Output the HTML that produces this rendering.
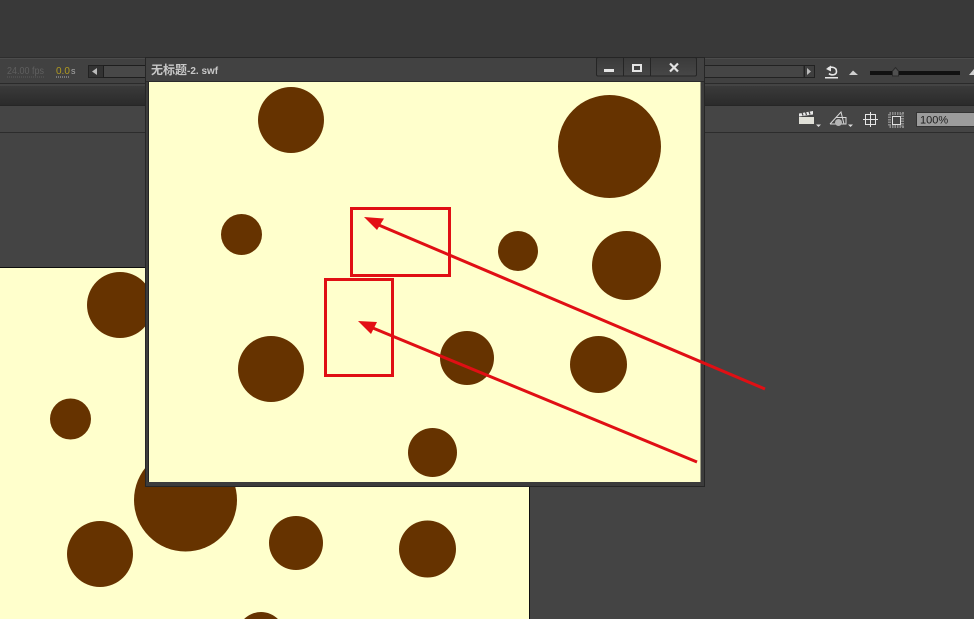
<!DOCTYPE html>
<html><head><meta charset="utf-8"><style>
html,body{margin:0;padding:0;background:#444;width:974px;height:619px;overflow:hidden}
svg{display:block;position:absolute;left:0;top:0}
text{font-family:"Liberation Sans","Noto Sans CJK SC",sans-serif}
</style></head><body>
<svg width="974" height="619" viewBox="0 0 974 619" xmlns="http://www.w3.org/2000/svg">
<defs>
<linearGradient id="band" x1="0" y1="0" x2="0" y2="1"><stop offset="0" stop-color="#3a3a3a"/><stop offset="1" stop-color="#2a2a2a"/></linearGradient>
<linearGradient id="btn" x1="0" y1="0" x2="0" y2="1"><stop offset="0" stop-color="#3a3a3a"/><stop offset="1" stop-color="#474747"/></linearGradient>
</defs>
<!-- backgrounds -->
<rect width="974" height="619" fill="#434343"/>
<rect width="974" height="58" fill="#393939"/>
<rect y="58" width="974" height="25" fill="#414141"/>
<rect y="58" width="974" height="1" fill="#4c4c4c"/>
<rect y="57" width="974" height="1" fill="#2e2e2e"/>
<rect y="83" width="974" height="1" fill="#2a2a2a"/>
<rect y="84" width="974" height="2" fill="#444"/>
<rect y="86" width="974" height="20" fill="url(#band)"/>
<rect y="105" width="974" height="1" fill="#262626"/>
<rect y="106" width="974" height="26" fill="#454545"/>
<rect y="132" width="974" height="1" fill="#2c2c2c"/>
<rect y="133" width="974" height="486" fill="#444"/>

<!-- timeline controls left -->
<text x="7" y="74" font-size="10" fill="#5f5f5f" textLength="37" lengthAdjust="spacingAndGlyphs">24.00 fps</text>
<line x1="7" y1="77" x2="44" y2="77" stroke="#5a5a5a" stroke-dasharray="1 1"/>
<text x="56" y="74" font-size="10" fill="#b09a20">0.0</text>
<line x1="56" y1="77" x2="70" y2="77" stroke="#b0b0b0" stroke-dasharray="1 1"/>
<text x="71" y="74" font-size="9" fill="#aaa">s</text>
<rect x="88.500" y="65.500" width="15" height="12" fill="#333" stroke="#222"/>
<path d="M92 71.500L97 68V75Z" fill="#bbb"/>
<rect x="103.500" y="65.500" width="44" height="12" fill="#484848" stroke="#1e1e1e"/>

<!-- timeline controls right -->
<rect x="700" y="65.500" width="104" height="12" fill="#454545" stroke="#222"/>
<rect x="804.500" y="65.500" width="10" height="12" fill="#3f3f3f" stroke="#222"/>
<path d="M807 68L811 71.500L807 75Z" fill="#bbb"/>
<path d="M828 68.500C830 66.500 836.500 66.500 836.500 71.500C836.500 75.500 831 75.500 829 73.500" fill="none" stroke="#e6e6e6" stroke-width="1.600"/>
<path d="M826 69L831 65.500V71.500Z" fill="#e6e6e6"/>
<rect x="825" y="77" width="13" height="1.500" fill="#e6e6e6"/>
<path d="M849 75L853 70.500L858 75Z" fill="#cfcfcf"/>
<rect x="870" y="71" width="90" height="4" fill="#111"/>
<path d="M892.500 71L895.500 67.500L898.500 71V76H892.500Z" fill="#505050" stroke="#2a2a2a"/>
<path d="M969 75L974 69V75Z" fill="#cfcfcf"/>

<!-- right toolbar icons -->
<rect x="799" y="117" width="15" height="7" fill="#e0e0d8"/>
<path d="M799 113.500L813 111V114.500L799 116.500Z" fill="#e8e8e8"/>
<path d="M802 112.500L803 115.500M805.500 112L806.500 115M809 111.500L810 114.500" stroke="#444" stroke-width="1.200"/>
<path d="M816 124.500H821L818.500 127Z" fill="#ddd"/>
<path d="M830 124H846V117.500H836M830 124L841 112L844 124" fill="none" stroke="#d8d8d8" stroke-width="1"/>
<circle cx="838.500" cy="122.500" r="3.500" fill="#b5b5b5"/>
<path d="M848 124.500H853L850.500 127Z" fill="#ddd"/>
<g fill="none" stroke="#e6e6e6">
<rect x="865.500" y="114.500" width="10" height="10"/>
<path d="M870.500 112V127M863 119.500H878"/>
<rect x="889.500" y="113.500" width="13" height="13" stroke="#8a8a8a" stroke-width="3" stroke-dasharray="1.500 1"/>
<rect x="892.500" y="116.500" width="8" height="8" stroke="#e0e0e0"/>
</g>
<rect x="916.500" y="112.500" width="58" height="14" fill="#9c9c9c" stroke="#333"/>
<text x="920" y="123.500" font-size="11" fill="#1d1d1d">100%</text>

<!-- stage behind -->
<rect x="0" y="268" width="529" height="351" fill="#ffffcc"/>
<rect x="0" y="267" width="530" height="1" fill="#0e0e0e"/>
<rect x="529" y="267" width="1" height="352" fill="#0e0e0e"/>
<g fill="#663300">
<circle cx="120" cy="305" r="33"/>
<circle cx="70.500" cy="419" r="20.500"/>
<circle cx="185.500" cy="500" r="51.500"/>
<circle cx="100" cy="554" r="33"/>
<circle cx="296" cy="543" r="27"/>
<circle cx="427.500" cy="549" r="28.500"/>
<path d="M244.100 619A24 24 0 0 1 277.900 619Z"/>
</g>

<!-- swf window -->
<rect x="145.500" y="57.500" width="559" height="429" fill="#414141" stroke="#262626"/>
<rect x="146" y="58" width="558" height="23" fill="#424242"/>
<rect x="146" y="81" width="558" height="1" fill="#2a2a2a"/>
<text x="151" y="74" fill="#c8c8c8" font-weight="bold"><tspan font-size="12">无标题</tspan><tspan font-size="10">-2. swf</tspan></text>
<!-- window buttons -->
<rect x="596.500" y="57.500" width="100" height="18.500" rx="1.500" fill="url(#btn)" stroke="#252525"/>
<line x1="623.500" y1="58" x2="623.500" y2="76" stroke="#252525"/>
<line x1="650.500" y1="58" x2="650.500" y2="76" stroke="#252525"/>
<rect x="604" y="69" width="10" height="3" fill="#e4e4e4"/>
<rect x="633" y="65" width="8" height="6" fill="none" stroke="#e4e4e4" stroke-width="2"/>
<path d="M670 63.500L678 71.500M678 63.500L670 71.500" stroke="#e4e4e4" stroke-width="2.200" fill="none"/>
<!-- frame sides -->
<rect x="700" y="82" width="4" height="404" fill="#3c3c3c"/>
<rect x="146" y="82" width="3" height="404" fill="#3c3c3c"/>
<rect x="148" y="82" width="1" height="400" fill="#242424"/>
<rect x="146" y="482" width="558" height="4" fill="#3c3c3c"/>
<!-- movie -->
<rect x="149" y="82" width="551.500" height="400" fill="#ffffcc"/>
<g fill="#663300">
<circle cx="291" cy="120" r="33"/>
<circle cx="609.500" cy="146.500" r="51.500"/>
<circle cx="241.500" cy="234.500" r="20.500"/>
<circle cx="518" cy="251" r="20"/>
<circle cx="626.500" cy="265.500" r="34.500"/>
<circle cx="271" cy="369" r="33"/>
<circle cx="467" cy="358" r="27"/>
<circle cx="598.500" cy="364.500" r="28.500"/>
<circle cx="432.500" cy="452.500" r="24.500"/>
</g>

<!-- red annotations -->
<g fill="none" stroke="#e00f14" stroke-width="3">
<rect x="351.500" y="208.500" width="98" height="67"/>
<rect x="325.500" y="279.500" width="67" height="96"/>
<path d="M374 223L765 389"/>
<path d="M368 326L697 462"/>
</g>
<path d="M364 217L384 218.500L377 230Z" fill="#e30f14"/>
<path d="M358 321L377 322L371 334Z" fill="#e30f14"/>
</svg>
</body></html>
